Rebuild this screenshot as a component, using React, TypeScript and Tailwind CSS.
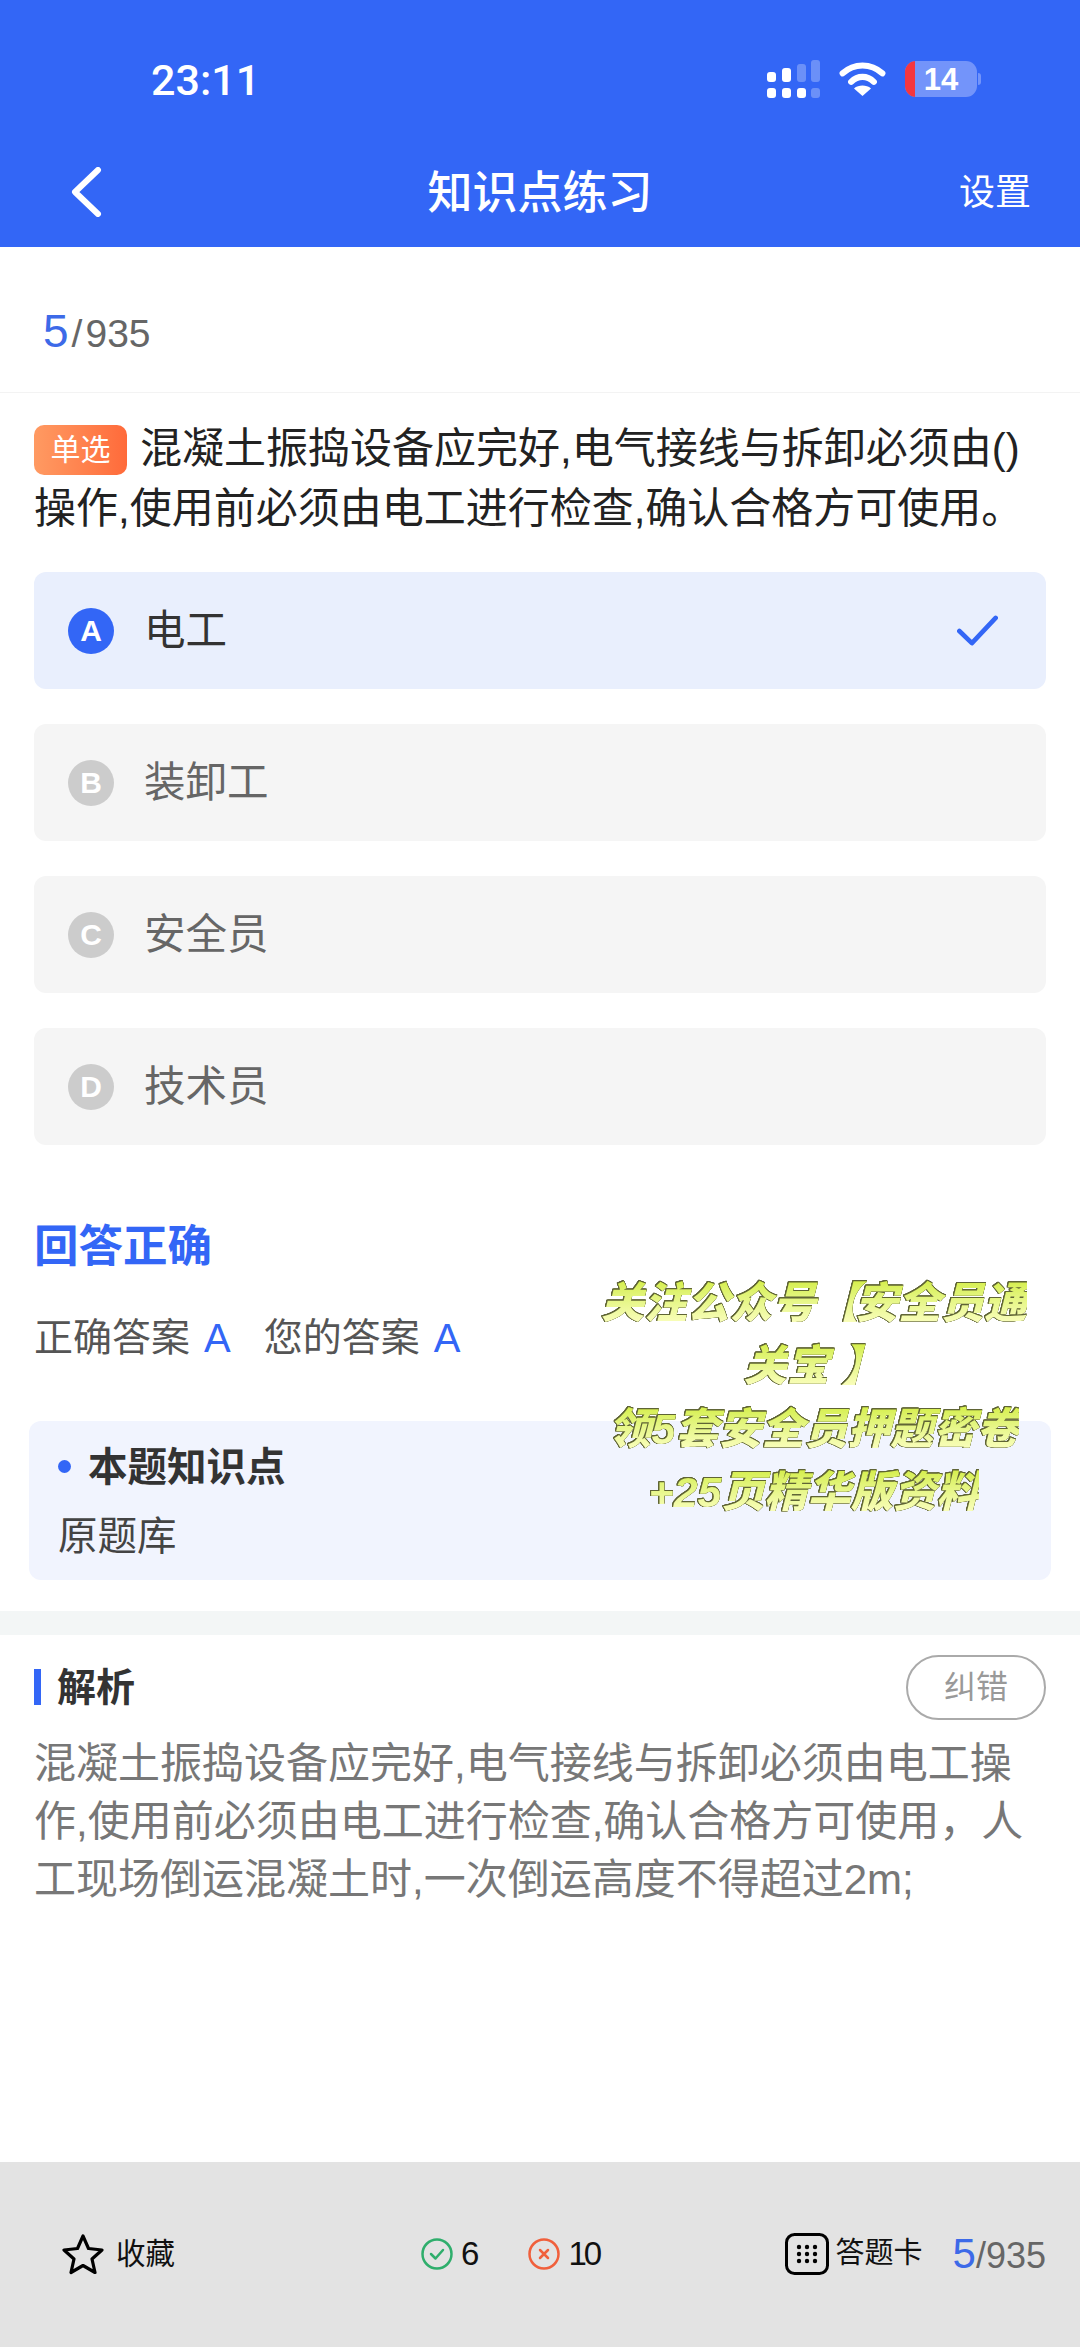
function Signal() {
  const on = "#ffffff";
  const off = "rgba(255,255,255,0.28)";
  return (
    <svg width="53" height="38" viewBox="0 0 53 38" className="block">
      <rect x="0" y="12" width="9" height="10" rx="3" fill={on} />
      <rect x="15" y="8" width="9" height="14" rx="3" fill={on} />
      <rect x="30" y="4" width="9" height="18" rx="3" fill={off} />
      <rect x="44" y="0" width="9" height="22" rx="3" fill={off} />
      <rect x="0" y="28" width="9" height="10" rx="3" fill={on} />
      <rect x="15" y="28" width="9" height="10" rx="3" fill={on} />
      <rect x="30" y="28" width="9" height="10" rx="3" fill={on} />
      <rect x="44" y="28" width="9" height="10" rx="3" fill={off} />
    </svg>
  );
}
function Wifi() {
  return (
    <svg width="47" height="34" viewBox="0 0 48 36" fill="none" className="block">
      <path d="M3 12 C15 1 33 1 45 12" stroke="#fff" strokeWidth="6.5" strokeLinecap="round" />
      <path d="M12 21 C19 14 29 14 36 21" stroke="#fff" strokeWidth="6.5" strokeLinecap="round" />
      <path d="M24 36 L15 28 C20 24 28 24 33 28 Z" fill="#fff" />
    </svg>
  );
}
function Battery() {
  return (
    <div className="flex items-center">
      <div className="relative flex h-[36px] w-[72px] items-center justify-center overflow-hidden rounded-[11px] bg-[#7394fa]">
        <div className="absolute left-0 top-0 h-full w-[10px] bg-[#f5363f]" />
        <span className="text-[31px] font-bold leading-none text-white">14</span>
      </div>
      <div className="ml-[1px] h-[12px] w-[3px] rounded-r-full bg-[#7394fa]" />
    </div>
  );
}
function Option({ letter, text, active }: { letter: string; text: string; active?: boolean }) {
  return (
    <div className={active ? "flex h-[117px] items-center rounded-[12px] bg-[#e9effd] pl-[34px] pr-[48px]" : "flex h-[117px] items-center rounded-[12px] bg-[#f5f5f5] pl-[34px] pr-[48px]"}>
      <div className={active ? "flex h-[46px] w-[46px] items-center justify-center rounded-full bg-[#3366f6] text-[30px] font-bold text-white" : "flex h-[46px] w-[46px] items-center justify-center rounded-full bg-[#cccccc] text-[30px] font-bold text-white"}>
        {letter}
      </div>
      <span className={active ? "ml-[30px] text-[41.5px] leading-none text-[#333333]" : "ml-[30px] text-[41.5px] leading-none text-[#666666]"}>{text}</span>
      {active && (
        <svg width="41" height="32" viewBox="0 0 44 34" fill="none" className="ml-auto">
          <path d="M2.5 17 L16 30 L41.5 3" stroke="#3366f6" strokeWidth="5" strokeLinecap="round" strokeLinejoin="round" />
        </svg>
      )}
    </div>
  );
}
const lineClass = "bg-gradient-to-b from-[#d4ee42] to-[#fdffc4] bg-clip-text text-transparent";
const outline = "[filter:drop-shadow(0.8px_0_0_#5f6435)_drop-shadow(-0.8px_0_0_#5f6435)_drop-shadow(0_0.8px_0_#5f6435)_drop-shadow(0_-0.8px_0_#5f6435)]";
export default function App() {
  return (
    <div className="relative flex h-[2347px] w-[1080px] flex-col overflow-hidden bg-white font-['Liberation_Sans','Noto_Sans_CJK_SC',sans-serif]">
      <header className="flex h-[247px] shrink-0 flex-col bg-[#3366f6] text-white">
        <div className="flex h-[158px] items-center pl-[151px] pr-[99px]">
          <span className="mt-[2px] font-['Roboto'] text-[43px] font-medium leading-none">23:11</span>
          <div className="ml-auto flex items-center gap-[19px]">
            <Signal />
            <Wifi />
            <Battery />
          </div>
        </div>
        <div className="relative mt-[4px] flex h-[62px] items-center justify-center">
          <svg width="32" height="50" viewBox="0 0 32 50" fill="none" className="absolute left-[70px] top-[5px]">
            <path d="M28 3 L5 25 L28 47" stroke="#fff" strokeWidth="6" strokeLinecap="round" strokeLinejoin="round" />
          </svg>
          <span className="text-[45px] font-medium leading-none">知识点练习</span>
          <span className="absolute left-[959px] top-[13px] text-[36px] leading-none">设置</span>
        </div>
      </header>

      <div className="flex h-[146px] shrink-0 items-center border-b border-[#f3f3f3] pl-[43px] pt-[22px]">
        <span className="text-[39px] leading-none text-[#666666]">
          <span className="text-[46px] text-[#3d6ae8]">5</span><span className="mx-[3px]">/</span>935
        </span>
      </div>

      <section className="px-[34px] pt-[26px]">
        <p className="text-[42px] leading-[60px] text-[#222222]">
          <span className="mr-[13px] inline-flex h-[50px] w-[93px] items-center justify-center rounded-[10px] bg-gradient-to-r from-[#ff9a62] to-[#ff6a3a] align-[3px] text-[30px] leading-none text-white">单选</span>
          混凝土振捣设备应完好,电气接线与拆卸必须由()操作,使用前必须由电工进行检查,确认合格方可使用。
        </p>
        <div className="mt-[33px] flex flex-col gap-[35px]">
          <Option letter="A" text="电工" active />
          <Option letter="B" text="装卸工" />
          <Option letter="C" text="安全员" />
          <Option letter="D" text="技术员" />
        </div>
      </section>

      <section className="px-[34px] pt-[80px]">
        <h2 className="text-[44.5px] font-bold leading-none text-[#3366f6]">回答正确</h2>
        <div className="mt-[48px] flex items-center text-[39px] leading-none text-[#555555]">
          <span>正确答案</span>
          <span className="ml-[14px] text-[40px] text-[#3366f6]">A</span>
          <span className="ml-[33px]">您的答案</span>
          <span className="ml-[14px] text-[40px] text-[#3366f6]">A</span>
        </div>
      </section>

      <div className="ml-[29px] mr-[29px] mt-[63px] h-[159px] rounded-[12px] bg-[#f1f4fe] pl-[29px] pt-[23px]">
        <div className="flex items-center">
          <span className="h-[13px] w-[13px] rounded-full bg-[#3366f6]" />
          <span className="ml-[17px] text-[39.5px] font-bold leading-[46px] text-[#333333]">本题知识点</span>
        </div>
        <div className="mt-[27px] text-[39.5px] leading-none text-[#444444]">原题库</div>
      </div>

      <div className="mt-[31px] h-[24px] shrink-0 bg-[#f3f6f6]" />

      <section className="flex-1 px-[34px] pt-[20px]">
        <div className="flex items-center">
          <span className="h-[36px] w-[7px] bg-[#3366f6]" />
          <span className="ml-[16px] text-[39px] font-bold leading-none text-[#333333]">解析</span>
          <span className="ml-auto flex h-[65px] w-[140px] items-center justify-center rounded-full border-2 border-[#aaaaaa] text-[32px] leading-none text-[#999999]">纠错</span>
        </div>
        <p className="mt-[15px] text-[42px] leading-[58px] text-[#777777]">
          混凝土振捣设备应完好,电气接线与拆卸必须由电工操作,使用前必须由电工进行检查,确认合格方可使用，人工现场倒运混凝土时,一次倒运高度不得超过2m;
        </p>
      </section>

      <footer className="flex h-[185px] shrink-0 items-center bg-[#e3e3e3] pb-[2px] pl-[62px] pr-[34px] text-[#111111]">
        <div className="flex items-center">
          <svg width="42" height="42" viewBox="0 0 42 42" fill="none">
            <path d="M21 3 L26.5 15.5 L40 17 L30 26 L33 39.5 L21 32.5 L9 39.5 L12 26 L2 17 L15.5 15.5 Z" stroke="#000" strokeWidth="3.2" strokeLinejoin="round" />
          </svg>
          <span className="ml-[12px] text-[29.5px] leading-none">收藏</span>
        </div>
        <div className="ml-[246px] flex items-center">
          <svg width="32" height="32" viewBox="0 0 32 32" fill="none">
            <circle cx="16" cy="16" r="14.5" stroke="#2fae6c" strokeWidth="2.5" />
            <path d="M10 16 L14.5 20.5 L22 12" stroke="#2fae6c" strokeWidth="2.5" strokeLinecap="round" strokeLinejoin="round" />
          </svg>
          <span className="ml-[8px] text-[33px] leading-none">6</span>
          <svg width="32" height="32" viewBox="0 0 32 32" fill="none" className="ml-[49px]">
            <circle cx="16" cy="16" r="14.5" stroke="#f0603c" strokeWidth="2.5" />
            <path d="M12 12 L20 20 M20 12 L12 20" stroke="#f0603c" strokeWidth="2.5" strokeLinecap="round" />
          </svg>
          <span className="ml-[8px] text-[33px] leading-none tracking-[-3px]">10</span>
        </div>
        <div className="ml-auto flex items-center">
          <svg width="44" height="42" viewBox="0 0 44 42" fill="none">
            <rect x="1.5" y="1.5" width="41" height="39" rx="8" stroke="#000" strokeWidth="3" />
            <g fill="#000">
              <circle cx="14" cy="14" r="2.2" /><circle cx="22" cy="14" r="2.2" /><circle cx="30" cy="14" r="2.2" />
              <circle cx="14" cy="21" r="2.2" /><circle cx="22" cy="21" r="2.2" /><circle cx="30" cy="21" r="2.2" />
              <circle cx="14" cy="28" r="2.2" /><circle cx="22" cy="28" r="2.2" /><circle cx="30" cy="28" r="2.2" />
            </g>
          </svg>
          <span className="ml-[7px] text-[29px] leading-none">答题卡</span>
          <span className="ml-[30px] text-[36px] leading-none text-[#666666]">
            <span className="text-[42px] text-[#3d6ae8]">5</span>/935
          </span>
        </div>
      </footer>

      <div className={"absolute left-[592px] top-[1272px] w-[444px] text-center text-[43px] font-black italic leading-[63px] " + outline}>
        <div className="whitespace-nowrap"><span className={lineClass}>关注公众号<span className="tracking-[-8px]">【 </span>安全员通</span></div>
        <div><span className={lineClass}>关宝 】</span></div>
        <div><span className={lineClass}>领5套安全员押题密卷</span></div>
        <div><span className={lineClass}>+25页精华版资料</span></div>
      </div>
    </div>
  );
}
